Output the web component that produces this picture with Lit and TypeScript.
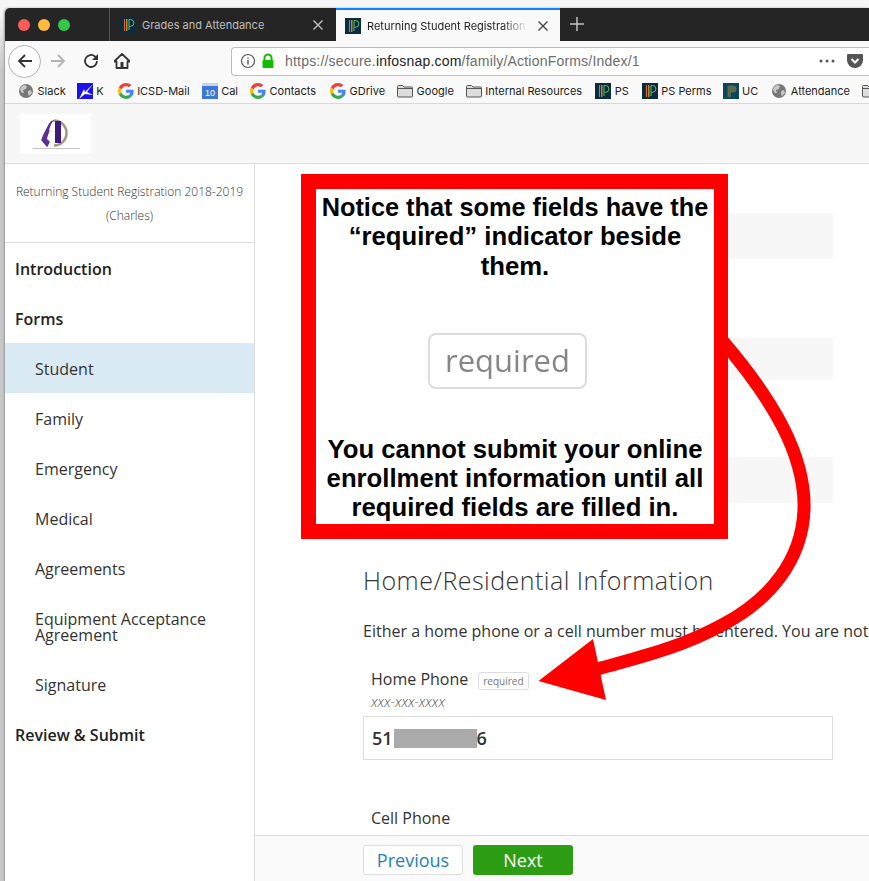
import { LitElement, html, css } from "lit";
import { customElement } from "lit/decorators.js";

const psIcon = html`<svg class="ico" viewBox="0 0 16 16"><rect width="16" height="16" fill="#0b2b3f"/><path d="M4.500 2v12" stroke="#e8682c" stroke-width="1.100"/><path d="M6.800 2v12" stroke="#e8b32c" stroke-width="1.100"/><path d="M9 2.500h1.500a3.400 3.400 0 0 1 0 6.800H9zM9 9.300V13" fill="none" stroke="#5fbf6a" stroke-width="1"/></svg>`;
const ucIcon = html`<svg class="ico" viewBox="0 0 16 16"><rect width="16" height="16" fill="#0d4560"/><path d="M4.500 2.500h5.500a3.400 3.400 0 0 1 0 7H8v4.500H4.500z" fill="#5a6a4a"/></svg>`;
const globe = html`<svg class="ico" viewBox="0 0 16 16"><circle cx="8" cy="8" r="7" fill="#777"/><path d="M3 4l3-2 3 1-1 3-3 1 1 3-2 0-2-3zM10 8l3-1 1 3-3 3-1-2z" fill="#c8c8c8"/></svg>`;
const g = html`<svg class="ico g" viewBox="0 0 48 48"><path fill="#EA4335" d="M24 9.500c3.540 0 6.710 1.220 9.210 3.600l6.850-6.850C35.900 2.380 30.470 0 24 0 14.620 0 6.510 5.380 2.560 13.220l7.980 6.190C12.430 13.720 17.740 9.500 24 9.500z"/><path fill="#4285F4" d="M46.980 24.550c0-1.570-.15-3.090-.38-4.550H24v9.020h12.940c-.58 2.960-2.260 5.480-4.780 7.180l7.730 6c4.510-4.180 7.090-10.360 7.090-17.650z"/><path fill="#FBBC05" d="M10.530 28.590c-.48-1.450-.76-2.990-.76-4.590s.27-3.140.76-4.590l-7.980-6.190C.92 16.460 0 20.120 0 24c0 3.880.92 7.540 2.560 10.780l7.970-6.190z"/><path fill="#34A853" d="M24 48c6.480 0 11.930-2.130 15.890-5.810l-7.730-6c-2.150 1.450-4.920 2.300-8.160 2.300-6.260 0-11.570-4.220-13.470-9.910l-7.980 6.190C6.510 42.620 14.620 48 24 48z"/></svg>`;
const folder = html`<svg class="ico" viewBox="0 0 16 16"><path d="M.5 3.500a1 1 0 0 1 1-1h4l1.500 1.500h7.500a1 1 0 0 1 1 1v8a1 1 0 0 1-1 1h-13a1 1 0 0 1-1-1z" fill="#ddd" stroke="#555"/><path d="M.5 5.500h15" stroke="#555"/></svg>`;
const kIcon = html`<svg class="ico" viewBox="0 0 16 16"><rect width="16" height="16" fill="#1a12f0"/><path d="M2 16L7 6l1 3 8-8-6 8 6 3-8-1z" fill="#fff"/></svg>`;
const cal = html`<svg class="ico" viewBox="0 0 16 16"><rect y="1" width="16" height="15" fill="#3b78d8"/><rect y="0" width="16" height="3" fill="#c8d4e8"/><text x="8" y="13" text-anchor="middle" font-size="9" fill="#fff" font-family="Liberation Sans">10</text></svg>`;

type Mark = [unknown, string, number];
const marks: Mark[] = [
  [globe, "Slack", 11], [kIcon, "K", 14], [g, "ICSD-Mail", 12], [cal, "Cal", 12], [g, "Contacts", 14], [g, "GDrive", 12],
  [folder, "Google", 12], [folder, "Internal Resources", 13], [psIcon, "PS", 13], [psIcon, "PS Perms", 11], [ucIcon, "UC", 13], [globe, "Attendance", 12], [folder, "", 0],
];

@customElement("app-root")
export class AppRoot extends LitElement {
  static styles = css`
    :host { display: block; width: 869px; height: 881px; overflow: hidden; position: relative; background: linear-gradient(to bottom, #f6f6f6 12px, #c8c8c8 70px); font-family: "Open Sans", sans-serif; color: #333; }
    .window { margin-left: 5px; margin-top: 8px; height: 873px; width: 864px; display: flex; flex-direction: column; background: #fff; box-shadow: -1px 0 2px #999; border-top-left-radius: 5px; overflow: hidden; }
    .tabs { height: 33px; background: #252525; display: flex; flex: none; }
    .lights { width: 105px; display: flex; align-items: center; gap: 8px; padding-left: 13px; box-sizing: border-box; border-right: 1px solid #555; }
    .lights i { width: 12px; height: 12px; border-radius: 50%; }
    .red { background: #fc5b57; } .yellow { background: #fdbc40; } .green { background: #34c84a; }
    .tab { display: flex; align-items: center; box-sizing: border-box; font: 11px "Inter", "Liberation Sans", sans-serif; gap: 6px; }
    .tab.off { color: #bdbdbd; padding-left: 10px; width: 226px; }
    .tab.on { background: #f9f9f9; color: #222; border-top: 2px solid #0a84ff; padding-left: 9px; width: 224px; }
    .tab .title { flex: 1; overflow: hidden; white-space: nowrap; }
    .tab.on .title { -webkit-mask-image: linear-gradient(to right, #000 85%, transparent 100%); mask-image: linear-gradient(to right, #000 85%, transparent 100%); }
    .tab .x { width: 12px; height: 12px; margin-right: 12px; flex: none; }
    .tab.on .x { margin-right: 11px; margin-left: 4px; }
    .plus { width: 14px; height: 14px; margin: 9px 0 0 10px; flex: none; }
    .ico { width: 16px; height: 16px; flex: none; display: block; }
    .toolbar { height: 34px; padding-top: 6px; box-sizing: border-box; background: #f9f9f9; flex: none; display: flex; align-items: center; position: relative; z-index: 1; }
    .back { width: 33px; height: 33px; border: 1px solid #b1b1b1; border-radius: 50%; background: #fff; box-sizing: border-box; display: flex; align-items: center; justify-content: center; margin-left: 3px; flex: none; }
    .tb { width: 16px; height: 16px; flex: none; }
    .fwd { margin-left: 9px; } .reload { margin-left: 17px; } .home { margin-left: 15px; }
    .url { margin-left: 101px; width: 638px; flex: none; height: 29px; border: 1px solid #bdbdbd; border-radius: 4px 0 0 4px; border-right: 0; background: #fff; box-sizing: border-box; display: flex; align-items: center; font: 14px "Liberation Sans", Arial, sans-serif; color: #6c6c6c; white-space: nowrap; padding: 0 6px 0 8px; letter-spacing: .2px; }
    .url b { font-weight: 400; color: #222; }
    .lock { margin: 0 9px 0 4px; }
    .spacer { flex: 1; }
    .dots { flex: none; }
    .pocket { margin-left: 12px; }
    .marks { height: 29px; padding-top: 3px; background: #f9f9f9; flex: none; border-bottom: 1px solid #d8d8d8; box-sizing: border-box; display: flex; align-items: center; padding-left: 13px; font: 11px "Inter", "Liberation Sans", sans-serif; color: #222; white-space: nowrap; }
    .mark { display: flex; align-items: center; gap: 3.500px; flex: none; }
    .head { height: 60px; background: #f7f7f7; flex: none; border-bottom: 1px solid #ddd; box-sizing: border-box; padding: 10px 0 0 15px; }
    .logo { width: 71px; height: 40px; background: #fff; display: block; }
    .logo svg { display: block; filter: blur(.5px); }
    .body { flex: 1; display: flex; min-height: 0; }
    .side { width: 249px; flex: none; border-right: 1px solid #ddd; background: #fff; }
    .sidehead { height: 79px; border-bottom: 1px solid #ddd; box-sizing: border-box; padding: 16px 5px 0; text-align: center; font-size: 12px; line-height: 24px; font-weight: 300; color: #333; white-space: nowrap; }
    .nav { font-size: 16px; color: #333; }
    .nav div { padding: 2px 10px 0; box-sizing: border-box; display: flex; align-items: center; height: 50px; line-height: 16px; }
    .nav .top { font-weight: 600; color: #222; }
    .nav .sub { padding-left: 30px; }
    .nav .sel { background: #d9eaf4; }
    .nav .two { height: 66px; }
    .main { flex: 1; position: relative; min-width: 0; display: flex; flex-direction: column; overflow: hidden; }
    .scroll { flex: 1; padding: 49px 0 0 108px; box-sizing: border-box; min-height: 0; overflow: hidden; }
    .ghost { width: 470px; height: 46px; background: #f7f7f7; }
    .ghost.g2 { margin-top: 79px; height: 42px; }
    .ghost.g3 { margin-top: 77px; }
    .h2 { font-size: 25px; font-weight: 300; line-height: 34px; color: #333; margin-top: 60px; white-space: nowrap; letter-spacing: .48px; }
    .p { font-size: 16px; line-height: 20px; margin-top: 24px; white-space: nowrap; color: #333; }
    .lab { display: flex; align-items: center; margin: 28px 0 0 8px; font-size: 16px; line-height: 20px; height: 20px; }
    .lab.cell { margin-top: 48px; }
    .req { font-size: 10px; line-height: 17px; border: 1px solid #ddd; border-radius: 3px; color: #777; padding: 0 4px; margin: 4px 0 0 10px; height: 16px; }
    .hint { margin: 5px 0 0 8px; font-size: 14px; line-height: 16px; font-style: italic; font-weight: 300; color: #555; }
    .input { width: 470px; height: 44px; margin-top: 6px; box-sizing: border-box; border: 1px solid #ddd; padding-left: 8px; display: flex; align-items: center; font-size: 18px; font-weight: 600; color: #333; }
    .blur { width: 83px; height: 19px; background: #aaa; margin: 1px 0 0 1px; flex: none; }
    .foot { height: 46px; flex: none; border-top: 1px solid #ddd; background: #fafafa; box-sizing: border-box; display: flex; gap: 10px; padding: 9px 0 0 108px; }
    .btn { width: 100px; height: 30px; box-sizing: border-box; border-radius: 3px; font-size: 18px; display: flex; align-items: center; justify-content: center; }
    .prev { background: #fff; border: 1px solid #ddd; color: #1f80bd; }
    .next { background: #2d9e14; color: #fff; }
    .notice { position: absolute; left: 301px; top: 174px; width: 427px; height: 365px; box-sizing: border-box; border: 15px solid #ff0000; border-right-width: 14px; background: #fff; font: 700 25.700px/29.300px "Liberation Sans", Arial, sans-serif; color: #000; text-align: center; }
    .notice p { margin: 0; white-space: nowrap; }
    .t1 { padding-top: 4px; font-size: 25.300px; }
    .bigreq { width: 159px; height: 56px; box-sizing: border-box; margin: 52px 0 0 112px; border: 2px solid #dcdcdc; border-radius: 8px; font: 400 31px/50px "Open Sans", sans-serif; color: #868686; filter: blur(.7px); }
    .notice .t2 { margin-top: 46px; }
    .arrow { position: absolute; left: 0; top: 0; }
  `;

  render() {
    const x = (c: string) => html`<svg class="x" viewBox="0 0 12 12"><path d="M1.500 1.500l9 9M10.500 1.500l-9 9" stroke=${c} stroke-width="1.400"/></svg>`;
    return html`
      <div class="window">
        <div class="tabs">
          <div class="lights"><i class="red"></i><i class="yellow"></i><i class="green"></i></div>
          <div class="tab off">${psIcon}<span class="title">Grades and Attendance</span>${x("#c0c0c0")}</div>
          <div class="tab on">${psIcon}<span class="title">Returning Student Registration</span>${x("#444")}</div>
          <svg class="plus" viewBox="0 0 14 14"><path d="M7 0v14M0 7h14" stroke="#c4c4c4" stroke-width="1.500"/></svg>
        </div>
        <div class="toolbar">
          <div class="back"><svg class="tb" viewBox="0 0 16 16"><path d="M15 8H2M8 2L2 8l6 6" fill="none" stroke="#333" stroke-width="1.800"/></svg></div>
          <svg class="tb fwd" viewBox="0 0 16 16"><path d="M1 8h13M8 2l6 6-6 6" fill="none" stroke="#b3b3b3" stroke-width="1.800"/></svg>
          <svg class="tb reload" viewBox="0 0 16 16"><path d="M14 8a6 6 0 1 1-2-4.500L14 5" fill="none" stroke="#333" stroke-width="1.800"/><path d="M15 1v6H9z" fill="#333"/></svg>
          <svg class="tb home" viewBox="0 0 16 16"><path d="M8 1L0 8.500h2.500V15h11V8.500H16z" fill="none" stroke="#333" stroke-width="1.800" stroke-linejoin="round"/><rect x="6.500" y="9" width="3" height="5" fill="#333"/></svg>
          <div class="url">
            <svg class="tb" viewBox="0 0 16 16"><circle cx="8" cy="8" r="6.500" fill="none" stroke="#555" stroke-width="1.200"/><path d="M8 7v4.500M8 4.500v1.300" stroke="#555" stroke-width="1.400"/></svg>
            <svg class="tb lock" viewBox="0 0 16 16"><path d="M4.500 7V5a3.500 3.500 0 0 1 7 0v2" fill="none" stroke="#12bc00" stroke-width="2"/><rect x="2.500" y="7" width="11" height="8" rx="1" fill="#12bc00"/></svg>
            <span>https://secure.<b>infosnap.com</b>/family/ActionForms/Index/1</span>
            <span class="spacer"></span>
            <svg class="dots" width="16" height="4" viewBox="0 0 16 4"><circle cx="2" cy="2" r="1.500" fill="#555"/><circle cx="8" cy="2" r="1.500" fill="#555"/><circle cx="14" cy="2" r="1.500" fill="#555"/></svg>
            <svg class="tb pocket" viewBox="0 0 16 16"><path d="M1 1h14a1 1 0 0 1 1 1v5a8 8 0 0 1-16 0V2a1 1 0 0 1 1-1z" fill="#555"/><path d="M4.500 6L8 9.500 11.500 6" fill="none" stroke="#fff" stroke-width="2"/></svg>
          </div>
        </div>
        <div class="marks">
          ${marks.map((m) => html`<div class="mark" style="margin-right:${m[2]}px">${m[0]}<span>${m[1]}</span></div>`)}
        </div>
        <div class="head"><div class="logo"><svg width="71" height="40" viewBox="0 0 71 40"><path d="M34 6.500a12.500 12.500 0 1 1 0 25" fill="none" stroke="#a8947e" stroke-width="2.500"/><path d="M34 6.500C30 8 27 13 27 19" fill="none" stroke="#4b2a80" stroke-width="1.200"/><rect x="35" y="7" width="6" height="22" fill="#3c1a80"/><path d="M32 7C28 13 24 20 22 26l5 6 2-4-3-3 3-9" fill="#5b2f92" stroke="#5b2f92" stroke-width="1.500"/><rect x="13" y="34" width="47" height="1" fill="#c4c4c4"/></svg></div></div>
        <div class="body">
          <div class="side">
            <div class="sidehead">Returning Student Registration 2018-2019<br/>(Charles)</div>
            <div class="nav">
              <div class="top">Introduction</div>
              <div class="top">Forms</div>
              <div class="sub sel">Student</div>
              <div class="sub">Family</div>
              <div class="sub">Emergency</div>
              <div class="sub">Medical</div>
              <div class="sub">Agreements</div>
              <div class="sub two">Equipment Acceptance<br/>Agreement</div>
              <div class="sub">Signature</div>
              <div class="top">Review &amp; Submit</div>
            </div>
          </div>
          <div class="main">
            <div class="scroll">
              <div class="ghost"></div>
              <div class="ghost g2"></div>
              <div class="ghost g3"></div>
              <div class="h2">Home/Residential Information</div>
              <div class="p">Either a home phone or a cell number must be entered. You are not required to enter both.</div>
              <div class="lab">Home Phone <span class="req">required</span></div>
              <div class="hint">xxx-xxx-xxxx</div>
              <div class="input"><span>51</span><span class="blur"></span><span>6</span></div>
              <div class="lab cell">Cell Phone</div>
            </div>
            <div class="foot"><div class="btn prev">Previous</div><div class="btn next">Next</div></div>
          </div>
        </div>
      </div>
      <svg class="arrow" width="869" height="881" viewBox="0 0 869 881">
        <path d="M720 338C772 398 806 455 804 510C802 560 770 600 722 625C680 648 640 657 598 669" fill="none" stroke="#ff0000" stroke-width="13"/>
        <path d="M538.500 681L593 639L606 700z" fill="#ff0000"/>
      </svg>
      <div class="notice">
        <p class="t1">Notice that some fields have the</p>
        <p>“required” indicator beside</p>
        <p>them.</p>
        <div class="bigreq">required</div>
        <p class="t2">You cannot submit your online</p>
        <p>enrollment information until all</p>
        <p>required fields are filled in.</p>
      </div>
    `;
  }
}
